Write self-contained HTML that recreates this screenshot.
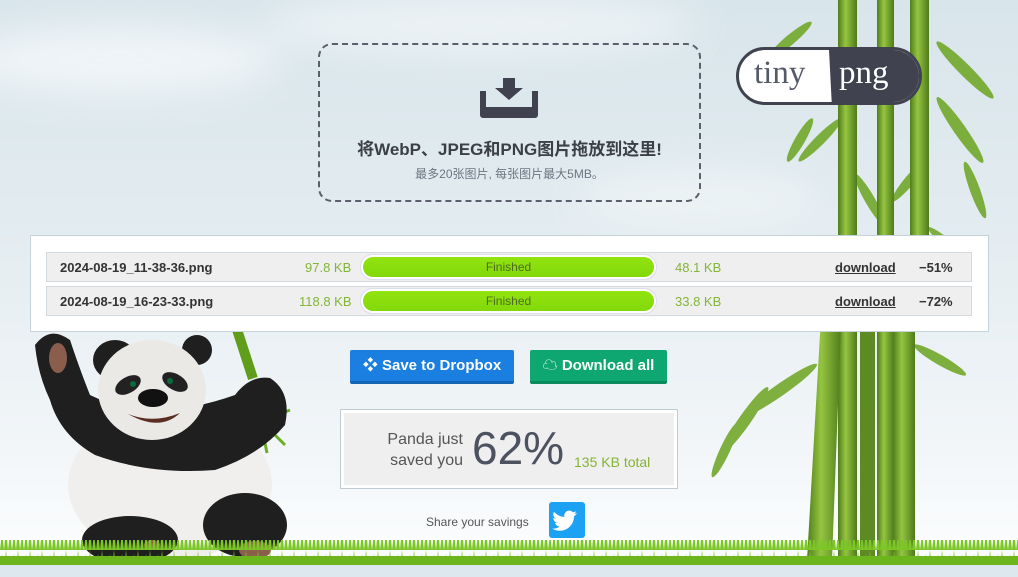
<!DOCTYPE html>
<html><head><meta charset="utf-8"><style>
*{margin:0;padding:0;box-sizing:border-box}
body{width:1018px;height:577px;overflow:hidden;position:relative;font-family:"Liberation Sans","Noto Sans CJK SC",sans-serif;background:linear-gradient(#d8e5eb 0%,#e3ecf0 40%,#f1f5f8 75%,#fafcfd 94%)}
.abs{position:absolute}
#drop{left:318px;top:43px;width:383px;height:159px;border:2px dashed #5a5f6b;border-radius:14px;text-align:center}
#drop h1{font-size:17px;font-weight:bold;color:#3b3f48;margin-top:90px}
#drop p{font-size:12px;color:#6e7580;margin-top:5px}
#logo{left:736px;top:47px;width:186px;height:58px;border-radius:29px;background:#fff;border:3px solid #40434f;overflow:hidden;font-family:"Liberation Serif",serif;font-size:33px}
#panel{left:30px;top:235px;width:959px;height:97px;background:#fff;border:1px solid #c5d2d9}
.row{position:absolute;left:15px;width:926px;height:30px;background:#efefef;border:1px solid #d2dadf;font-size:13px}
.row span{position:absolute;top:7px}
.bar{position:absolute;left:313px;top:1px;width:297px;height:26px;border-radius:13px;background:#fff;border:1px solid #dde}
.bar div{position:absolute;left:2px;top:2px;right:2px;bottom:2px;border-radius:11px;background:linear-gradient(#92e40f,#82d80a);text-align:center;font-size:12px;color:#4d6b20;line-height:20px}
.btn{top:350px;height:34px;color:#fff;font-weight:bold;font-size:15px;line-height:32px;text-align:center;border-radius:2px}
#save{left:340px;top:409px;width:338px;height:80px;border:1px solid #bfcbd2;background:#fff;padding:3px}
#save div{background:#efefef;height:72px;position:relative}
</style></head><body>
<svg class="abs" style="left:0;top:0" width="1018" height="577">
<defs>
<linearGradient id="st" x1="0" x2="1"><stop offset="0" stop-color="#4f7d1c"/><stop offset=".4" stop-color="#95c540"/><stop offset="1" stop-color="#4e7a1a"/></linearGradient>
<filter id="bl"><feGaussianBlur stdDeviation="18"/></filter>
<pattern id="gr" width="12" height="22" patternUnits="userSpaceOnUse"><path d="M0 22 L2 4 L4 22 L6 0 L8 22 L10 6 L12 22Z" fill="#7cc626"/></pattern>
</defs>
<g filter="url(#bl)" opacity=".8">
<ellipse cx="120" cy="60" rx="160" ry="35" fill="#f4f8fa"/>
<ellipse cx="480" cy="25" rx="220" ry="30" fill="#f0f5f7"/>
<ellipse cx="700" cy="200" rx="120" ry="30" fill="#eef4f6"/>
</g>
<g fill="#72a82c" opacity=".9">
<ellipse cx="790" cy="40" rx="28" ry="5" transform="rotate(-40 790 40)"/><ellipse cx="965" cy="70" rx="40" ry="6" transform="rotate(45 965 70)"/>
<ellipse cx="960" cy="130" rx="40" ry="6" transform="rotate(55 960 130)"/><ellipse cx="820" cy="140" rx="30" ry="5" transform="rotate(-45 820 140)"/>
<ellipse cx="800" cy="140" rx="25" ry="5" transform="rotate(-60 800 140)"/><ellipse cx="955" cy="250" rx="35" ry="5" transform="rotate(40 955 250)"/>
<ellipse cx="780" cy="390" rx="45" ry="6" transform="rotate(-35 780 390)"/><ellipse cx="745" cy="420" rx="40" ry="6" transform="rotate(-55 745 420)"/>
<ellipse cx="725" cy="450" rx="30" ry="5" transform="rotate(-65 725 450)"/><ellipse cx="940" cy="360" rx="30" ry="5" transform="rotate(30 940 360)"/>
<ellipse cx="870" cy="200" rx="30" ry="5" transform="rotate(60 870 200)"/><ellipse cx="910" cy="180" rx="28" ry="5" transform="rotate(-50 910 180)"/>
<ellipse cx="770" cy="90" rx="25" ry="5" transform="rotate(-20 770 90)"/><ellipse cx="975" cy="190" rx="30" ry="5" transform="rotate(70 975 190)"/>
</g>
<rect x="838" y="0" width="19" height="560" fill="url(#st)"/>
<rect x="877" y="0" width="17" height="560" fill="url(#st)"/>
<rect x="910" y="0" width="19" height="330" fill="url(#st)"/>
<polygon points="807,560 822,300 842,300 832,560" fill="url(#st)"/>
<rect x="893" y="300" width="22" height="260" fill="url(#st)"/>
<rect x="860" y="300" width="15" height="260" fill="#5d8a22"/>
<!-- panda -->
<rect x="238" y="318" width="10" height="62" fill="#5f9d1a" transform="rotate(-18 243 348)"/>
<path d="M265 420 l25 -10 M265 425 l20 20 M262 428 l5 25" stroke="#6aae24" stroke-width="3"/>
<ellipse cx="170" cy="485" rx="102" ry="75" fill="#f1efed"/>
<path d="M35 345 Q50 325 70 340 Q80 370 90 395 Q150 425 235 395 Q250 375 270 378 Q292 392 285 425 Q260 455 215 470 Q150 475 95 455 Q60 435 50 400 Q38 375 35 345Z" fill="#1f1f1f"/>
<ellipse cx="115" cy="360" rx="22" ry="20" fill="#1f1f1f"/><ellipse cx="197" cy="350" rx="15" ry="15" fill="#1f1f1f"/>
<ellipse cx="152" cy="390" rx="54" ry="50" fill="#ebe9e6"/>
<ellipse cx="128" cy="385" rx="14" ry="8" fill="#222" transform="rotate(-30 128 385)"/><ellipse cx="175" cy="382" rx="14" ry="8" fill="#222" transform="rotate(30 175 382)"/>
<circle cx="133" cy="384" r="3" fill="#0a6b3c"/><circle cx="170" cy="381" r="3" fill="#0a6b3c"/>
<ellipse cx="153" cy="398" rx="15" ry="9" fill="#111"/>
<path d="M128 414 Q153 424 180 413 Q160 432 128 414Z" fill="#5a2f22"/>
<ellipse cx="58" cy="358" rx="9" ry="15" fill="#8a5d4c"/>
<ellipse cx="130" cy="540" rx="48" ry="24" fill="#1f1f1f"/><ellipse cx="245" cy="525" rx="42" ry="32" fill="#1f1f1f"/>
<ellipse cx="152" cy="545" rx="8" ry="5" fill="#8a5d4c"/><ellipse cx="255" cy="550" rx="16" ry="9" fill="#8a5d4c"/>
<rect x="0" y="540" width="1018" height="22" fill="url(#gr)"/>
<rect x="0" y="556" width="1018" height="9" fill="#6cb51d"/>
<rect x="0" y="565" width="1018" height="12" fill="#dce8ee"/>
</svg>
<div id="drop" class="abs">
<svg class="abs" style="left:160px;top:33px" width="58" height="40" viewBox="0 0 58 40"><path d="M23 0h12v10h8L29 22 15 10h8z" fill="#40434f"/><path d="M0 13h6v16h46V13h6v24a3 3 0 0 1-3 3H3a3 3 0 0 1-3-3z" fill="#40434f"/><rect x="8" y="30" width="42" height="1.5" fill="#40434f"/><rect x="8" y="33" width="42" height="1.5" fill="#40434f"/></svg>
<h1>将WebP、JPEG和PNG图片拖放到这里!</h1><p>最多20张图片, 每张图片最大5MB。</p></div>
<div id="logo" class="abs"><span class="abs" style="left:15px;top:5px;color:#545a68">tiny</span><div class="abs" style="left:90px;top:0;width:100px;height:58px;background:#40434f;clip-path:polygon(0 0,100% 0,100% 100%,3px 100%)"></div><span class="abs" style="left:100px;top:5px;color:#fff">png</span></div>
<div id="panel" class="abs">
<div class="row" style="top:16px"><span style="left:13px;font-weight:bold;color:#333">2024-08-19_11-38-36.png</span><span style="left:258px;color:#84b536">97.8 KB</span><div class="bar"><div>Finished</div></div><span style="left:628px;color:#84b536">48.1 KB</span><span style="left:788px;font-weight:bold;color:#333;text-decoration:underline">download</span><span style="left:872px;font-weight:bold;color:#333">−51%</span></div>
<div class="row" style="top:50px"><span style="left:13px;font-weight:bold;color:#333">2024-08-19_16-23-33.png</span><span style="left:252px;color:#84b536">118.8 KB</span><div class="bar"><div>Finished</div></div><span style="left:628px;color:#84b536">33.8 KB</span><span style="left:788px;font-weight:bold;color:#333;text-decoration:underline">download</span><span style="left:872px;font-weight:bold;color:#333">−72%</span></div>
</div>
<div class="abs btn" style="left:350px;width:164px;background:#1a7fe0;border-bottom:3px solid #1365b6">&#10070; Save to Dropbox</div>
<div class="abs btn" style="left:530px;width:137px;background:#0ea671;border-bottom:3px solid #0b8a5d">&#9729; Download all</div>
<div id="save" class="abs"><div>
<span class="abs" style="left:36px;top:16px;font-size:16px;color:#555;text-align:right;line-height:21px;width:83px">Panda just<br>saved you</span>
<span class="abs" style="left:128px;top:8px;font-size:46px;color:#4c5260">62%</span>
<span class="abs" style="left:230px;top:41px;font-size:14px;color:#84b536">135 KB total</span>
</div></div>
<div class="abs" style="left:426px;top:515px;font-size:12px;color:#555">Share your savings</div>
<div class="abs" style="left:549px;top:502px;width:36px;height:36px;background:#1da1f2;border-radius:3px"><svg width="36" height="36" viewBox="0 0 36 36"><path d="M28 11c-1 .5-2 .7-3 .8 1-.6 1.8-1.6 2.2-2.7-1 .6-2 1-3.2 1.2a5 5 0 0 0-8.6 4.6C11.2 14.7 7.5 12.7 5 9.7c-1.4 2.4-.6 5.4 1.6 6.8-.8 0-1.600-.2-2.3-.6 0 2.4 1.7 4.5 4 5-.7.2-1.5.2-2.3.1.7 2 2.6 3.4 4.7 3.5A10 10 0 0 1 3 26.5 14.3 14.3 0 0 0 25 14.4c1-.7 1.9-1.6 2.6-2.6z" fill="#fff"/></svg></div>
</body></html>
